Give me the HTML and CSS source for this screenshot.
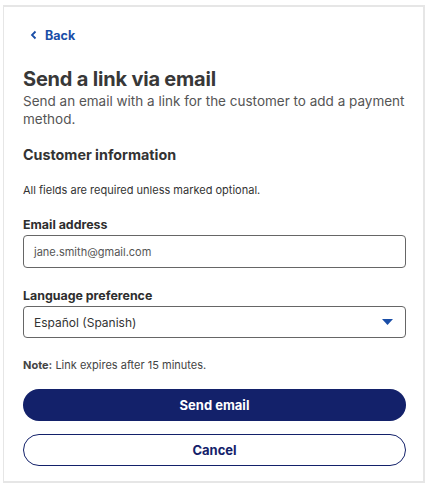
FILE: index.html
```html
<!DOCTYPE html>
<html>
<head>
<meta charset="utf-8">
<link rel="stylesheet" href="styles.css">
</head>
<body>
<div class="card">
  <a class="back" href="#">
    <svg width="8" height="10" viewBox="0 0 8 10"><path d="M5.5 1.5 L2 5 L5.5 8.5" fill="none" stroke="#1a4ea7" stroke-width="1.8"/></svg>
    <span>Back</span>
  </a>
  <h1 class="title">Send a link via email</h1>
  <p class="subtitle">Send an email with a link for the customer to add a payment method.</p>
  <h2 class="section">Customer information</h2>
  <p class="hint">All fields are required unless marked optional.</p>
  <div class="field">
    <label class="label">Email address</label>
    <div class="input"><span class="value muted">jane.smith@gmail.com</span></div>
  </div>
  <div class="field">
    <label class="label">Language preference</label>
    <div class="input select"><span class="value">Español (Spanish)</span>
      <svg width="11" height="6" viewBox="0 0 11 6"><path d="M0 0 H11 L5.5 6 Z" fill="#1a4ea7"/></svg>
    </div>
  </div>
  <p class="note"><b>Note:</b> Link expires after 15 minutes.</p>
  <div class="actions">
    <button class="btn primary">Send email</button>
    <button class="btn secondary">Cancel</button>
  </div>
</div>
</body>
</html>
```
FILE: styles.css
```css
html, body { margin: 0; padding: 0; background: #fff; }
body { padding: 5px 0 0 3px; font-family: Inter, "Open Sans", sans-serif; color: #333; }
.card {
  width: 400px;
  height: 474px;
  box-sizing: content-box;
  border-style: solid;
  border-color: #e6e6e6;
  border-width: 2px 2px 2px 1px;
  display: flex;
  flex-direction: column;
  padding-left: 19px;
}
.back {
  display: flex; align-items: center; gap: 7px;
  margin: 20px 0 0 7px;
  color: #1a4ea7; font-weight: 700; font-size: 12.5px; text-decoration: none;
  height: 16px;
}
.title { margin: 23px 0 0; font-size: 20px; font-weight: 700; color: #383838; line-height: 26px; letter-spacing: -0.2px; }
.subtitle { margin: 0; font-size: 13.5px; line-height: 18px; color: #555; width: 390px; }
.section { margin: 17px 0 0; font-size: 14.3px; font-weight: 700; color: #333; line-height: 20px; }
.hint { margin: 18px 0 0; font-size: 11px; color: #333; line-height: 14px; }
.field { display: flex; flex-direction: column; margin-top: 20px; }
.field + .field { margin-top: 20px; }
.label { font-size: 12.4px; font-weight: 700; color: #2e2e2e; line-height: 16px; margin-bottom: 2px; }
.input {
  width: 383px; height: 33px; box-sizing: border-box;
  border: 1px solid #666; border-radius: 4px;
  display: flex; align-items: center; justify-content: space-between;
  padding: 0 10px;
}
.value { font-size: 12px; color: #333; }
.value.muted { font-size: 11px; color: #555; }
.select { height: 32px; padding-right: 12px; }
.note { margin: 20px 0 0; font-size: 11px; color: #444; line-height: 14px; }
.note b { font-weight: 700; }
.actions { display: flex; flex-direction: column; gap: 13px; margin-top: 17px; }
.btn {
  width: 383px; height: 32px; border-radius: 16px;
  font-family: Inter, "Open Sans", sans-serif; font-size: 13px; font-weight: 700;
}
.primary { background: #13216a; color: #fff; border: none; }
.secondary { background: #fff; color: #13216a; border: 1px solid #13216a; }
```
